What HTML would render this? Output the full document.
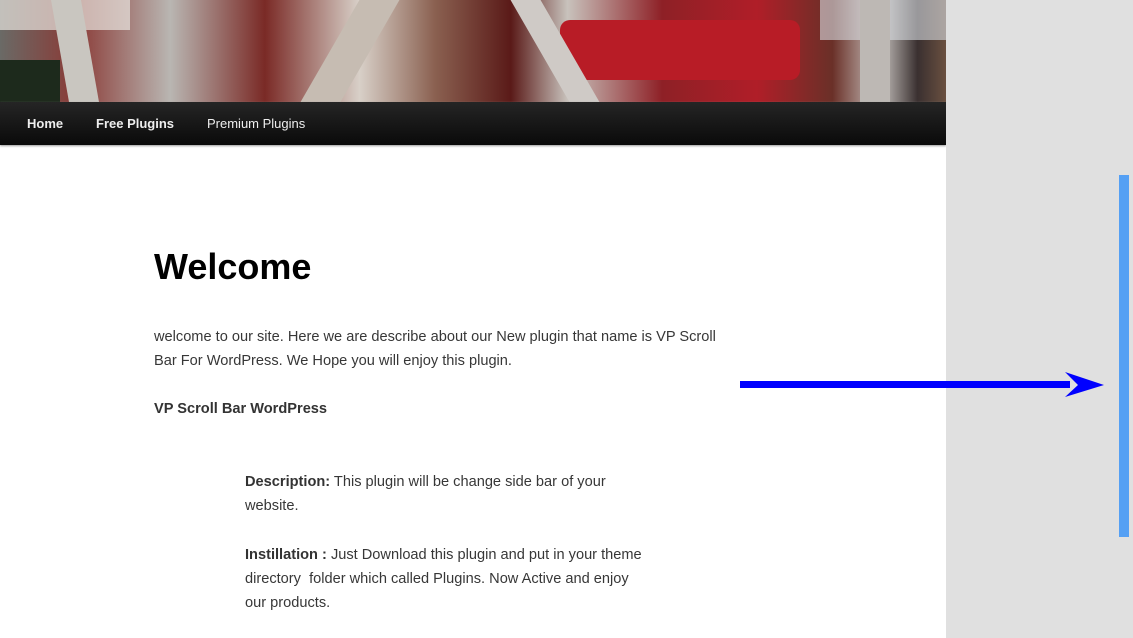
<!DOCTYPE html>
<html><head><meta charset="utf-8"><style>
body{margin:0;width:1133px;height:638px;overflow:hidden;background:#fff;font-family:"Liberation Sans",Arial,sans-serif;position:relative}
.hdr{position:absolute;left:0;top:0;width:946px;height:102px;overflow:hidden;
background:linear-gradient(90deg,#6a6a66 0%,#8a3a36 8%,#b9b6b2 18%,#7a2a26 28%,#d8d0c8 38%,#8a6050 46%,#5a1a18 54%,#c8c2bc 60%,#8e2026 70%,#b01e28 80%,#6a3028 88%,#c8c4c0 93%,#3a3030 97%,#6a5040 100%)}
.hdr div{position:absolute}
.nav{position:absolute;left:0;top:102px;width:946px;height:43px;background:linear-gradient(#252525,#0a0a0a);box-shadow:0 1px 2px #999}
.nav span{position:absolute;top:14px;color:#eee;font-size:13px}
.side{position:absolute;left:946px;top:0;width:187px;height:638px;background:#e0e0e0}
.sb{position:absolute;left:1119px;top:175px;width:10px;height:362px;background:#55a0f4}
p{margin:0;position:absolute;font-size:14.6px;color:#373737;white-space:nowrap}
b{color:#333}
</style></head><body>
<div class="hdr">
<div style="left:0;top:60px;width:60px;height:42px;background:#1d2a1c"></div>
<div style="left:0;top:0;width:130px;height:30px;background:#e8e6e0;opacity:.7"></div>
<div style="left:560px;top:20px;width:240px;height:60px;background:#b81c26;border-radius:10px"></div>
<div style="left:820px;top:0;width:126px;height:40px;background:#d8dde2;opacity:.6"></div>
<div style="left:60px;top:0;width:30px;height:102px;background:#c9c6c0;transform:skewX(10deg)"></div>
<div style="left:330px;top:0;width:40px;height:102px;background:#c6bcb2;transform:skewX(-30deg)"></div>
<div style="left:540px;top:0;width:30px;height:102px;background:#cfcac6;transform:skewX(30deg)"></div>
<div style="left:860px;top:0;width:30px;height:102px;background:#bdb8b4"></div>
</div>
<div class="nav">
<span style="left:27px;font-weight:bold">Home</span>
<span style="left:96px;font-weight:bold">Free Plugins</span>
<span style="left:207px">Premium Plugins</span>
</div>
<div class="side"></div>
<div class="sb"></div>
<h1 style="position:absolute;left:154px;top:246px;margin:0;font-size:36px;font-weight:bold;color:#000">Welcome</h1>
<p style="left:154px;top:329px">welcome to our site. Here we are describe about our New plugin that name is VP Scroll</p>
<p style="left:154px;top:353px">Bar For WordPress. We Hope you will enjoy this plugin.</p>
<p style="left:154px;top:401px"><b>VP Scroll Bar WordPress</b></p>
<p style="left:245px;top:474px"><b>Description:</b> This plugin will be change side bar of your</p>
<p style="left:245px;top:498px">website.</p>
<p style="left:245px;top:547px"><b>Instillation :</b> Just Download this plugin and put in your theme</p>
<p style="left:245px;top:571px">directory&nbsp; folder which called Plugins. Now Active and enjoy</p>
<p style="left:245px;top:595px">our products.</p>
<svg style="position:absolute;left:0;top:0" width="1133" height="638">
<rect x="740" y="381" width="330" height="7" fill="#0000ff"/>
<polygon points="1065,372 1104,385 1065,397 1078,385" fill="#0000ff"/>
</svg>
</body></html>
